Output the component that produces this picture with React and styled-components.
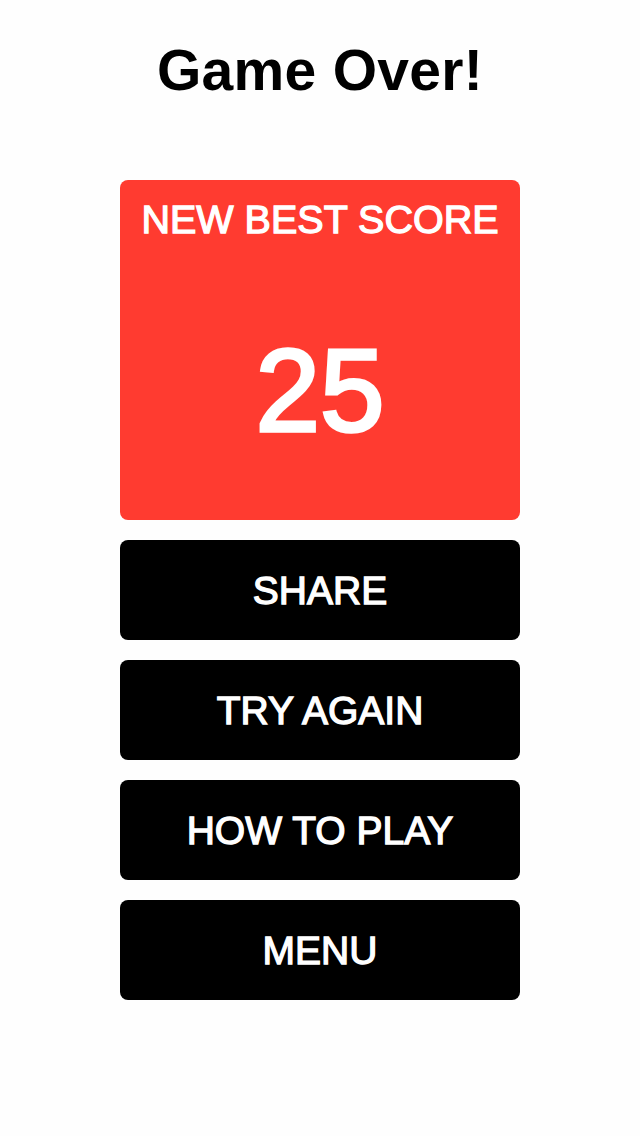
import React from 'react';
import styled, { createGlobalStyle } from 'styled-components';

const GlobalStyle = createGlobalStyle`
  html, body {
    margin: 0;
    padding: 0;
    background: #fefefe;
  }
  body {
    font-family: "Liberation Sans", Arial, sans-serif;
    -webkit-font-smoothing: antialiased;
  }
`;

const Screen = styled.div`
  width: 640px;
  min-height: 1136px;
  display: flex;
  flex-direction: column;
  align-items: center;
  padding-top: 41px;
  box-sizing: border-box;
`;

const Title = styled.h1`
  margin: 0 0 81px;
  font-size: 57px;
  line-height: 58px;
  font-weight: 700;
  color: #000;
  letter-spacing: 0.3px;
`;

const Stack = styled.div`
  width: 400px;
  display: flex;
  flex-direction: column;
  gap: 20px;
`;

const ScoreCard = styled.div`
  height: 340px;
  background: #ff3b30;
  border-radius: 8px;
  display: flex;
  flex-direction: column;
  align-items: center;
  padding-top: 19px;
  box-sizing: border-box;
  color: #fff;
`;

/* medium weight: regular face thickened with a stroke */
const ScoreLabel = styled.div`
  font-size: 39.5px;
  line-height: 40px;
  font-weight: 400;
  -webkit-text-stroke: 1.3px #fff;
`;

const ScoreValue = styled.div`
  margin-top: 94px;
  font-size: 116px;
  line-height: 116px;
  font-weight: 400;
  -webkit-text-stroke: 3.4px #fff;
`;

const MenuButton = styled.button`
  height: 100px;
  border: none;
  border-radius: 8px;
  background: #000;
  color: #fff;
  font-family: inherit;
  font-size: 39px;
  line-height: 1;
  font-weight: 400;
  -webkit-text-stroke: 1.3px #fff;
  cursor: pointer;
  padding: 0;
`;

const actions = ['SHARE', 'TRY AGAIN', 'HOW TO PLAY', 'MENU'];

const App = () => {
  return (
    <>
      <GlobalStyle />
      <Screen>
        <Title>Game Over!</Title>
        <Stack>
          <ScoreCard>
            <ScoreLabel>NEW BEST SCORE</ScoreLabel>
            <ScoreValue>25</ScoreValue>
          </ScoreCard>
          {actions.map((label) => (
            <MenuButton key={label}>{label}</MenuButton>
          ))}
        </Stack>
      </Screen>
    </>
  );
};

export default App;
